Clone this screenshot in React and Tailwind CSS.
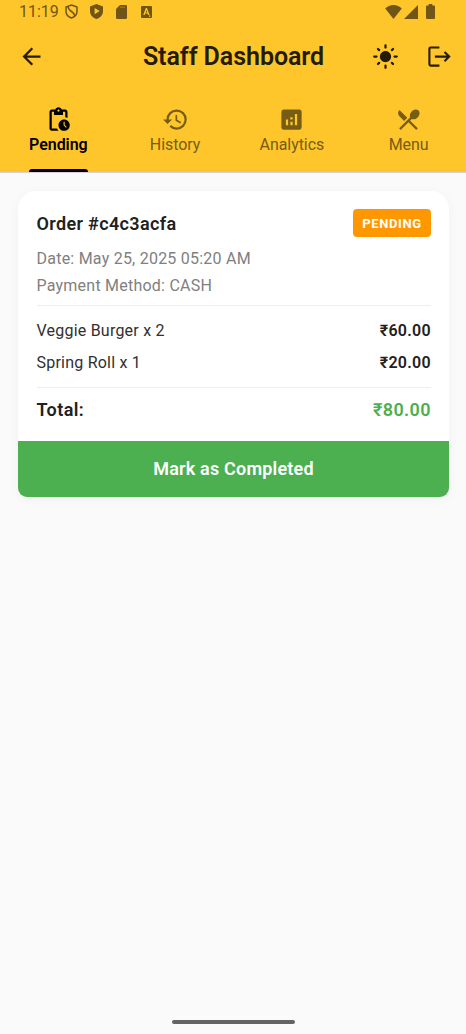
import React from "react";
import {
  MdArrowBack,
  MdLightMode,
  MdPendingActions,
  MdHistory,
  MdAnalytics,
  MdRestaurantMenu,
} from "react-icons/md";

function StatusBar() {
  return (
    <div className="flex h-[23px] items-center justify-between pl-[19px] pr-[31px] text-[#705516]">
      <div className="flex items-center">
        <span className="w-[46px] whitespace-nowrap text-[16px] leading-[23px] tracking-[0px]">11:19</span>
        <svg className="h-[15px] w-[13px]" viewBox="0 0 13 15" fill="none" stroke="currentColor" strokeWidth="1.5">
          <path d="M6.5 1 12 3v4.2c0 3.2-2.3 5.6-5.5 6.8C3.300 12.800 1 10.400 1 7.200V3z" />
          <path d="M3 2.500c.3 3 1.500 3.800 3.500 5s3 2.300 3.200 4.500" />
        </svg>
        <svg className="ml-[12px] h-[15px] w-[13px]" viewBox="0 0 13 15" fill="currentColor">
          <path fillRule="evenodd" d="M6.500 0 13 2.400v4.800c0 3.600-2.700 6.500-6.500 7.800C2.700 13.700 0 10.800 0 7.200V2.400zM4.600 4v6.200L9.700 7.100z" />
        </svg>
        <svg className="ml-[13px] h-[14px] w-[11px]" viewBox="0 0 11 14" fill="currentColor">
          <path d="M4 0h5.700Q11 0 11 1.300v11.400Q11 14 9.700 14H1.300Q0 14 0 12.700V4z" />
          <path d="M4 2.200h5" stroke="#ffc62b" strokeWidth="1" opacity="0.4" />
        </svg>
        <svg className="ml-[14px] h-[12px] w-[11px]" viewBox="0 0 11 12" fill="currentColor">
          <path fillRule="evenodd" d="M1 0h9q1 0 1 1v10q0 1-1 1H1q-1 0-1-1V1q0-1 1-1zM4.800 2 2.200 9h1.400l.5-1.400h2.500L7.100 9h1.400L6 2zM5.400 3.900l.8 2.500H4.600zM8 9.500v1.200h1.300V9.500z" />
        </svg>
      </div>
      <div className="flex items-center">
        <svg className="h-[14px] w-[17px]" viewBox="0 0 17 14" fill="currentColor">
          <path d="M8.500 14 .2 3.600C2.500 1.300 5.200 0 8.500 0s6 1.300 8.300 3.600z" />
        </svg>
        <svg className="ml-[1px] h-[14px] w-[15px]" viewBox="0 0 15 14" fill="currentColor">
          <path d="M15 0v14H1z" />
        </svg>
        <svg className="ml-[8px] h-[15px] w-[9px]" viewBox="0 0 9 15" fill="currentColor">
          <path d="M2.700 0h3.600v1.500H8q1 0 1 1V14q0 1-1 1H1q-1 0-1-1V2.500q0-1 1-1h1.700z" />
        </svg>
      </div>
    </div>
  );
}

function LogoutIcon() {
  return (
    <svg className="size-[27px]" viewBox="0 0 27 27" fill="none" stroke="currentColor" strokeWidth="2.1">
      <path d="M13.400 4.500H4.700q-1.300 0-1.300 1.300v15.500q0 1.300 1.300 1.300H13.400M8.900 13.600h14.200M18.500 8.900l4.700 4.700-4.700 4.700" />
    </svg>
  );
}

function TopBar() {
  return (
    <div className="grid h-[67px] grid-cols-[1fr_auto_1fr] items-center pl-[18px] pr-[13px] text-[#241c06]">
      <button aria-label="Back" className="justify-self-start">
        <MdArrowBack className="size-[27px]" />
      </button>
      <h1 className="mr-[4px] whitespace-nowrap text-[25px] font-semibold leading-[28px] tracking-[-0.06px]">Staff Dashboard</h1>
      <div className="flex items-center gap-[27px] justify-self-end">
        <button aria-label="Theme"><MdLightMode className="size-[27px]" /></button>
        <button aria-label="Log out"><LogoutIcon /></button>
      </div>
    </div>
  );
}

const tabs = [
  { label: "Pending", Icon: MdPendingActions, active: true },
  { label: "History", Icon: MdHistory },
  { label: "Analytics", Icon: MdAnalytics },
  { label: "Menu", Icon: MdRestaurantMenu },
];

function Tabs() {
  return (
    <nav className="grid h-[82px] w-[467px] grid-cols-4">
      {tabs.map(({ label, Icon, active }) => (
        <div key={label} className="flex justify-center">
          <div
            className={
              active
                ? "flex flex-col items-center pt-[16px] font-semibold text-black"
                : "flex flex-col items-center pt-[16px] text-[#775c14]"
            }
          >
            <Icon className="size-[27px]" />
            <span className="mt-[2px] whitespace-nowrap text-[16px] leading-[20px] tracking-[-0.05px]">{label}</span>
            {active && <span className="mt-auto h-[3px] w-full rounded-t-[3px] bg-black" />}
          </div>
        </div>
      ))}
    </nav>
  );
}

const items = [
  { name: "Veggie Burger x 2", price: "₹60.00" },
  { name: "Spring Roll x 1", price: "₹20.00" },
];

function OrderCard() {
  return (
    <section className="ml-[18px] mr-[17px] mt-[18px] h-[306px] overflow-hidden rounded-t-[18px] rounded-b-[9px] bg-white shadow-[0_2px_12px_rgba(0,0,0,0.04)]">
      <div className="h-[250px] pl-[18.500px] pr-[18px] pt-[18px] text-[#212121]">
        <div className="flex h-[28px] items-center justify-between">
          <h2 className="text-[18px] font-semibold tracking-[0.35px]">Order #c4c3acfa</h2>
          <span className="flex h-[28px] w-[78px] items-center justify-center rounded-[4px] bg-[#ff9800] pt-px text-[13px] font-bold tracking-[0.6px] text-white">
            PENDING
          </span>
        </div>
        <div className="mt-[8px] text-[16px] leading-[27px] tracking-[0.23px] text-[#808080]">
          <p>Date: May 25, 2025 05:20 AM</p>
          <p>Payment Method: CASH</p>
        </div>
        <hr className="mt-[6px] border-[#eeeeee]" />
        <div className="mt-[9px] text-[16px] leading-[32px]">
          {items.map((item) => (
            <div key={item.name} className="flex justify-between">
              <span className="tracking-[0.22px] text-[#303030]">{item.name}</span>
              <span className="font-semibold tracking-[0.3px]">{item.price}</span>
            </div>
          ))}
        </div>
        <hr className="mt-[8px] border-[#eeeeee]" />
        <div className="mt-[9px] flex justify-between text-[18px] font-semibold leading-[26px] tracking-[0.4px]">
          <span>Total:</span>
          <span className="text-[#4caf50]">₹80.00</span>
        </div>
      </div>
      <button className="h-[56px] w-full bg-[#4caf50] pb-px text-[18px] font-semibold tracking-[0.2px] text-white">
        Mark as Completed
      </button>
    </section>
  );
}

export default function App() {
  return (
    <div className="flex h-[1034px] w-[466px] flex-col overflow-hidden bg-[#fafafa] font-[Roboto,sans-serif]">
      <header className="h-[173px] border-b border-[#d9d0d8] bg-[#ffc62b]">
        <StatusBar />
        <TopBar />
        <Tabs />
      </header>
      <OrderCard />
      <div className="mx-auto mb-[10px] mt-auto h-[4px] w-[123px] rounded-full bg-[#646464]" />
    </div>
  );
}
